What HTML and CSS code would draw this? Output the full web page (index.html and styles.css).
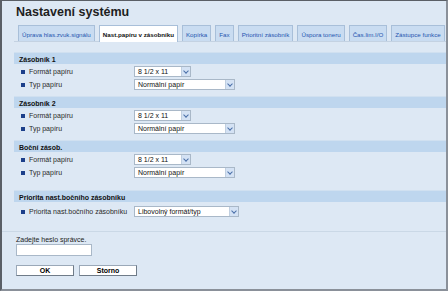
FILE: index.html
```html
<!DOCTYPE html>
<html lang="cs">
<head>
    <meta charset="UTF-8">
    <title>Nastavení systému</title>
    <link rel="stylesheet" href="styles.css">
</head>
<body>
    <div class="frame">
        <h1 class="page-title">Nastavení systému</h1>

        <div class="tabs">
            <span class="tab">Úprava hlas.zvuk.signálu</span>
            <span class="tab active">Nast.papíru v zásobníku</span>
            <span class="tab">Kopírka</span>
            <span class="tab">Fax</span>
            <span class="tab">Prioritní zásobník</span>
            <span class="tab">Úspora toneru</span>
            <span class="tab">Čas.lim.I/O</span>
            <span class="tab">Zástupce funkce</span>
        </div>

        <div class="section">
            <div class="section-head">Zásobník 1</div>
            <div class="row">
                <span class="label">Formát papíru</span>
                <span class="select small">8 1/2 x 11<i class="arrow"></i></span>
            </div>
            <div class="row">
                <span class="label">Typ papíru</span>
                <span class="select wide">Normální papír<i class="arrow"></i></span>
            </div>
        </div>

        <div class="section">
            <div class="section-head">Zásobník 2</div>
            <div class="row">
                <span class="label">Formát papíru</span>
                <span class="select small">8 1/2 x 11<i class="arrow"></i></span>
            </div>
            <div class="row">
                <span class="label">Typ papíru</span>
                <span class="select wide">Normální papír<i class="arrow"></i></span>
            </div>
        </div>

        <div class="section">
            <div class="section-head">Boční zásob.</div>
            <div class="row">
                <span class="label">Formát papíru</span>
                <span class="select small">8 1/2 x 11<i class="arrow"></i></span>
            </div>
            <div class="row">
                <span class="label">Typ papíru</span>
                <span class="select wide">Normální papír<i class="arrow"></i></span>
            </div>
        </div>

        <div class="section priority">
            <div class="section-head">Priorita nast.bočního zásobníku</div>
            <div class="row">
                <span class="label">Priorita nast.bočního zásobníku</span>
                <span class="select wider">Libovolný formát/typ<i class="arrow"></i></span>
            </div>
        </div>

        <div class="login">
            <div class="login-label">Zadejte heslo správce.</div>
            <div class="password"></div>
            <div class="buttons">
                <span class="btn">OK</span>
                <span class="btn">Storno</span>
            </div>
        </div>
    </div>
</body>
</html>
```

FILE: styles.css
```css
/* Reset */
* {
    margin: 0;
    padding: 0;
    box-sizing: border-box;
}

body {
    width: 448px;
    height: 291px;
    overflow: hidden;
    font-family: "Liberation Sans", Arial, sans-serif;
    background-color: #dde8f4;
}

/* Outer frame */
.frame {
    height: 291px;
    border-left: 2px solid #5a5f66;
    border-top: 1px solid #5a5f66;
    border-right: 2px solid #8a9099;
    border-bottom: 2px solid #8a9099;
    background-color: #dde8f4;
    padding: 0 0 0 12px;
}

.page-title {
    font-size: 12.5px;
    font-weight: bold;
    color: #1e1e1e;
    padding: 4px 0 0 2px;
    height: 24px;
}

/* Tabs */
.tabs {
    display: flex;
    gap: 4px;
    padding-left: 4px;
    height: 17px;
    border-bottom: 1px solid #c4d2e2;
}

.tab {
    font-size: 6.2px;
    color: #1f55b0;
    background-color: #c9dcf1;
    border: 1px solid #a8bfd9;
    border-bottom: none;
    padding: 5px 3px 0;
    height: 16px;
    white-space: nowrap;
}

.tab.active {
    background-color: #ffffff;
    color: #111;
    font-weight: bold;
    height: 17px;
}

/* Sections */
.section {
    margin-top: 10px;
}

.section + .section {
    margin-top: 5px;
}

.section.priority {
    margin-top: 11px;
}

.section-head {
    background-color: #bed6ee;
    font-size: 7px;
    font-weight: bold;
    color: #111;
    height: 12px;
    padding: 3px 0 0 5px;
    border-top: 1px solid #d0e0f0;
}

.row {
    display: flex;
    align-items: center;
    height: 13px;
}

.section-head + .row {
    margin-top: 1px;
}

.priority .row {
    margin-top: 3px;
}

.label {
    font-size: 7px;
    color: #2a2a2a;
    width: 120px;
    padding-left: 7px;
    display: flex;
    align-items: center;
}

.label::before {
    content: "";
    width: 4px;
    height: 4px;
    background-color: #1c3f8a;
    margin-right: 4px;
}

.select {
    position: relative;
    font-size: 7px;
    color: #111;
    background-color: #fff;
    border: 1px solid #a9b8c8;
    height: 11px;
    padding: 1px 0 0 3px;
}

.select.small { width: 57px; }
.select.wide { width: 101px; }
.select.wider { width: 105px; }

.arrow {
    position: absolute;
    right: 0;
    top: 0;
    width: 9px;
    height: 9px;
    background-color: #d4e2f4;
    border-left: 1px solid #c0cfe0;
}

.arrow::after {
    content: "";
    position: absolute;
    left: 2px;
    top: 2px;
    width: 3px;
    height: 3px;
    border-right: 1px solid #4a6fa8;
    border-bottom: 1px solid #4a6fa8;
    transform: rotate(45deg);
}

/* Login area */
.login {
    margin-top: 13px;
    margin-left: -12px;
    border-top: 1px solid #cad8e6;
    padding: 4px 0 0 14px;
}

.login-label {
    font-size: 7px;
    color: #222;
}

.password {
    width: 76px;
    height: 12px;
    background-color: #fff;
    border: 1px solid #a9b8c8;
    margin-top: 1px;
}

.buttons {
    display: flex;
    gap: 5px;
    margin-top: 9px;
}

.btn {
    width: 58px;
    height: 11px;
    font-size: 7px;
    font-weight: bold;
    text-align: center;
    line-height: 9px;
    background-color: #fff;
    border: 1px solid #9aa8b8;
    border-right-color: #6f7b88;
    border-bottom-color: #6f7b88;
}
```
